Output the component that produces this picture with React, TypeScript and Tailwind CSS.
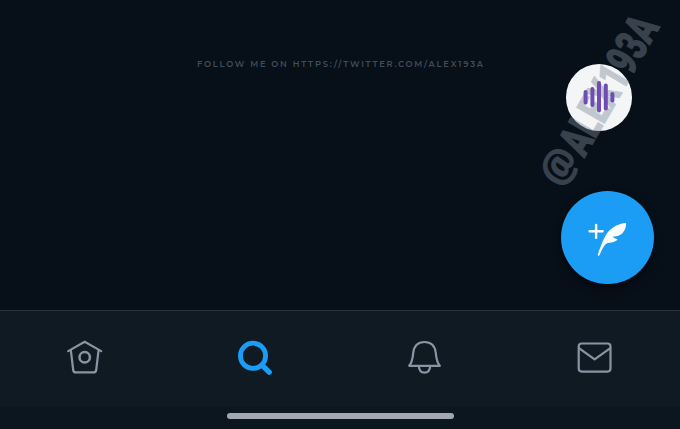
import React from "react";

const bars = [
  { x: 585.6, top: 92, bottom: 102.5 },
  { x: 592.4, top: 89, bottom: 105 },
  { x: 599, top: 83, bottom: 110.5 },
  { x: 605.8, top: 85.5, bottom: 108.5 },
  { x: 612.4, top: 94, bottom: 100.5 },
];

function Tab({ label, children }: { label: string; children: React.ReactNode }) {
  return (
    <button aria-label={label} className="flex h-[90px] items-center justify-center">
      <svg width="60" height="50" viewBox="0 0 60 50" fill="none" stroke="#8895a3" strokeWidth="2.2" strokeLinejoin="round" strokeLinecap="round">
        {children}
      </svg>
    </button>
  );
}

export default function App() {
  return (
    <div className="relative flex h-[429px] w-[680px] flex-col overflow-hidden bg-[#070f18]">
      <main className="flex h-[310px] justify-between">
        <p className="ml-[197px] mt-[57px] whitespace-nowrap text-[#434c59]">
          <svg width="288" height="13" className="block overflow-visible">
            <text x="0" y="9.5" textLength="286" lengthAdjust="spacing" fill="currentColor" className="font-['Montserrat','Lato',sans-serif] text-[8.3px] font-semibold">
              FOLLOW ME ON HTTPS://TWITTER.COM/ALEX193A
            </text>
          </svg>
        </p>
        <div className="mr-[26.5px] flex flex-col items-center pt-[64px]">
          <button aria-label="Spaces" className="mr-[17px] size-[66.5px] rounded-full bg-[#f4f5f7]" />
          <button aria-label="Compose" className="mt-[60.5px] flex size-[92.5px] items-center justify-center rounded-full bg-[#1b9df5] shadow-[0_4px_10px_rgba(0,0,0,0.45)]">
            <svg width="93" height="93" viewBox="0 0 93 93">
              <path d="M28.8 40.2h13M35.3 33.8v13" stroke="white" strokeWidth="2.4" strokeLinecap="round" />
              <path d="M65.4 32C59 32.2 51 36 46.3 42.3C42.5 48 39 57.5 37 64C37.2 65.1 38.2 65.2 38.8 64.2C40.5 60 42.5 55.5 44.8 53.2C47 50.8 53.5 52.8 57 48.2C54.8 48 53 47 51.6 45.8C55 45.4 58.8 45.2 61.5 42.5C64.4 39.7 65.7 35.5 65.4 32Z" fill="white" />
            </svg>
          </button>
        </div>
      </main>
      <nav className="h-[119px] border-t border-[#26313b] bg-gradient-to-b from-[#101a23] from-80% to-[#0b161f] to-82%">
        <div className="grid grid-cols-4">
          <Tab label="Home">
            <path d="M13.2 20.1L29.7 10.8L46.2 20.1M15.8 19L18.2 39Q18.5 41.4 20.8 41.4H38.6Q40.9 41.4 41.2 39L43.6 19" />
            <circle cx="29.7" cy="26.3" r="5.2" strokeWidth="2.5" />
          </Tab>
          <Tab label="Search">
            <circle cx="28" cy="24.8" r="12.6" stroke="#1b9df5" strokeWidth="4.8" />
            <path d="M37.5 34.6L44.2 41.1" stroke="#1b9df5" strokeWidth="5.4" />
          </Tab>
          <Tab label="Notifications">
            <path d="M14.2 34.8C17.4 31 17.6 27 18.2 22C19 14.8 23 11 29.5 11S40 14.8 40.8 22C41.4 27 41.6 31 44.8 34.8Z" />
            <path d="M23.8 35C24 39 26 41.7 29.5 41.7S35 39 35.2 35" />
          </Tab>
          <Tab label="Messages">
            <rect x="13.7" y="12.5" width="31.8" height="28.1" rx="3" />
            <path d="M14.3 17.3L29.6 28.3L45 17.3" />
          </Tab>
        </div>
        <div className="mx-auto mt-[12px] h-[6px] w-[227px] rounded-full bg-[#a3a7b0]" />
      </nav>
      <svg className="pointer-events-none absolute inset-0" width="680" height="429" viewBox="0 0 680 429">
        <g transform="translate(600 97) rotate(-60)" fill="#7b8997" stroke="#7b8997" strokeWidth="1" opacity="0.42" className="font-['Roboto',sans-serif] font-black">
          <text x="-98" y="9.5" textLength="35" lengthAdjust="spacingAndGlyphs" className="text-[38px]">@</text>
          <text x="-61" y="17" textLength="152" lengthAdjust="spacingAndGlyphs" className="text-[45px]">ALEX193A</text>
        </g>
        {bars.map((bar) => (
          <line key={bar.x} x1={bar.x} x2={bar.x} y1={bar.top} y2={bar.bottom} stroke="#704db5" strokeWidth="4" strokeLinecap="round" />
        ))}
      </svg>
    </div>
  );
}
